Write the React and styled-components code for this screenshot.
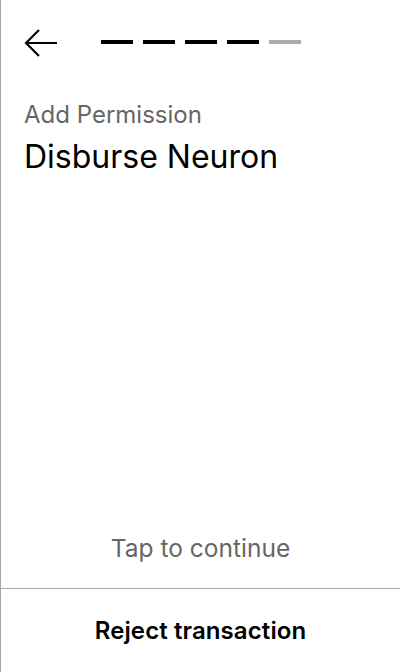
import styled, { createGlobalStyle } from "styled-components";

const GlobalStyle = createGlobalStyle`
  html, body {
    margin: 0;
    padding: 0;
    background: #fff;
  }
  body {
    font-family: Inter, "Noto Sans", sans-serif;
  }
`;

const steps = [true, true, true, true, false];

export default function App() {
  return (
    <>
      <GlobalStyle />
      <Screen>
        <Header>
          <BackButton aria-label="Back">
            <svg width="34" height="28" viewBox="0 0 34 28" fill="none">
              <path d="M33 14H2M15 1L2 14l13 13" stroke="#000" strokeWidth="2.2" />
            </svg>
          </BackButton>
          <Progress>
            {steps.map((done, i) => (
              <Dash key={i} $done={done} />
            ))}
          </Progress>
        </Header>
        <Body>
          <Label>Add Permission</Label>
          <Title>Disburse Neuron</Title>
        </Body>
        <Hint>Tap to continue</Hint>
        <Footer>
          <RejectButton>Reject transaction</RejectButton>
        </Footer>
      </Screen>
    </>
  );
}

const Screen = styled.div`
  height: 672px;
  box-sizing: border-box;
  border-left: 1px solid #a8a8a8;
  display: flex;
  flex-direction: column;
`;

const Header = styled.div`
  display: flex;
  align-items: center;
  gap: 43px;
  padding: 29px 0 0 23px;
`;

const BackButton = styled.button`
  border: 0;
  background: none;
  padding: 0;
  display: flex;
  cursor: pointer;
`;

const Progress = styled.div`
  display: flex;
  gap: 10px;
  margin-top: -2px;
`;

const Dash = styled.span`
  width: 32px;
  height: 4px;
  background: ${(p) => (p.$done ? "#000" : "#ababab")};
`;

const Body = styled.div`
  flex: 1;
  padding: 43px 24px 0 23px;
`;

const Label = styled.div`
  font-size: 24px;
  color: #666;
  line-height: 30px;
`;

const Title = styled.div`
  font-size: 32px;
  color: #000;
  line-height: 40px;
  margin-top: 7px;
`;

const Hint = styled.div`
  text-align: center;
  font-size: 24.5px;
  line-height: 30px;
  color: #666;
  padding-bottom: 25px;
`;

const Footer = styled.div`
  border-top: 1px solid #a8a8a8;
  height: 83px;
  display: flex;
  align-items: center;
  justify-content: center;
`;

const RejectButton = styled.button`
  border: 0;
  background: none;
  font-family: Inter, "Noto Sans", sans-serif;
  font-size: 24px;
  line-height: 30px;
  font-weight: 600;
  letter-spacing: 0.1px;
  color: #000;
  cursor: pointer;
  padding: 0;
`;
